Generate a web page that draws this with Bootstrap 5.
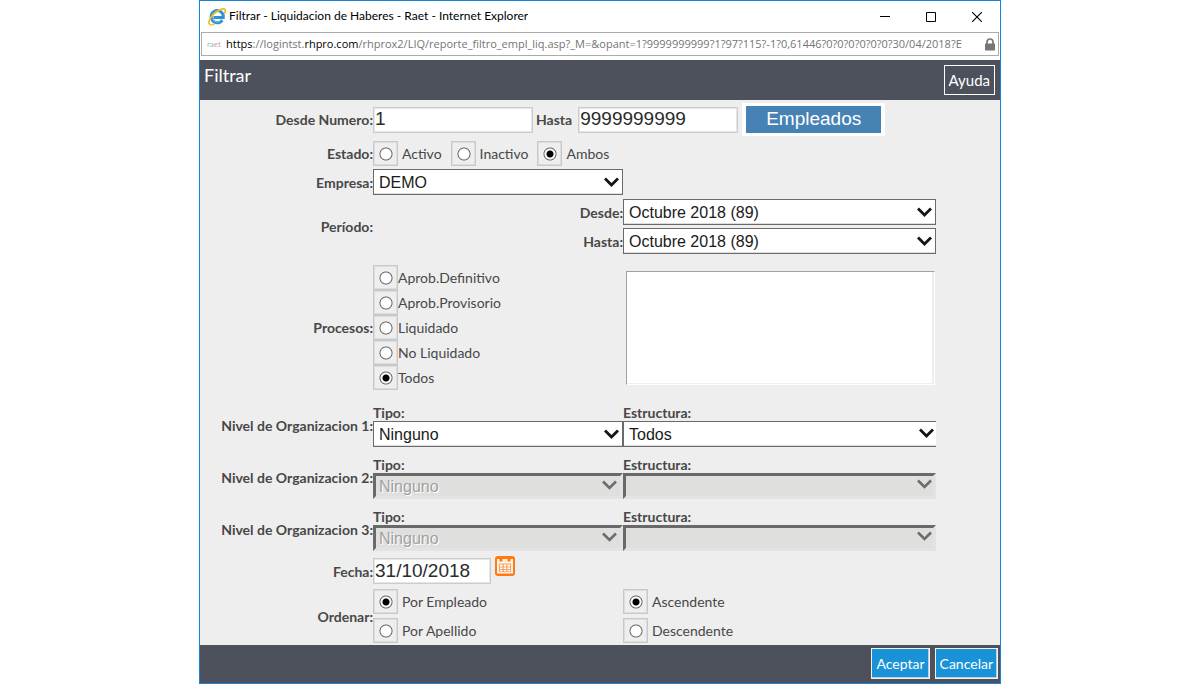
<!DOCTYPE html>
<html lang="es">
<head>
<meta charset="utf-8">
<meta name="viewport" content="width=device-width, initial-scale=1">
<title>Filtrar - Liquidacion de Haberes - Raet</title>
<link href="https://cdn.jsdelivr.net/npm/bootstrap@5.3.0/dist/css/bootstrap.min.css" rel="stylesheet">
<style>
  body { font-family: Lato, "Open Sans", sans-serif; font-size: 14px; line-height: 17px; color: #484848; background: #fff; }
  .ventana { max-width: 802px; border: 1px solid #1883d7; }

  /* Window chrome */
  .titulo { height: 31px; font-size: 12px; color: #000; padding-left: 8px; }
  .titulo .control { width: 46px; height: 31px; color: #000; }
  .titulo-texto { padding-left: 3px; line-height: 16px; margin-bottom: 2px; }
  .direccion { height: 24px; margin: 0 1px 4px; padding: 0 3px 0 5px; border: 1px solid #ababab;
               font: 11px/22px "Open Sans", sans-serif; color: #757575; }
  .direccion b { font-weight: 400; color: #000; }
  .marca { width: 19px; font: 8px/20px Lato, sans-serif; color: #d59a9a; }
  .marca i { font-style: normal; color: #8fc3bd; }

  .barra { background: #4d515c; color: #fff; }
  .encabezado { min-height: 40px; padding: 5px; padding-left: 4px; }
  .encabezado h1 { font-size: 18px; line-height: 20px; margin: 0; }
  .pie { min-height: 38px; padding: 3px 2px; gap: 5px; }
  .boton { --bs-btn-border-radius: 0; --bs-btn-padding-x: 4px; --bs-btn-padding-y: 0; --bs-btn-color: #fff;
           --bs-btn-border-color: #fff; --bs-btn-font-size: 15px; --bs-btn-hover-color: #fff; --bs-btn-hover-border-color: #fff;
           --bs-btn-line-height: 17px; height: 30px; }
  .accion { --bs-btn-bg: #1992d8; --bs-btn-hover-bg: #157fbd; --bs-btn-border-color: #f2f2f2; --bs-btn-font-size: 14px;
            --bs-btn-padding-y: 2px; height: 31px; box-shadow: inset -1px -1px 0 #b9cfdc; }

  /* Filter form */
  .filtro { background: #eee; padding: 3px 0 2px; }
  .fila { display: grid; grid-template-columns: 173fr 250fr 313fr 64fr; align-items: center; }
  .fila > .ancho { grid-column: 2 / -1; }
  .etiqueta { font-weight: 700; }
  .sep-3 { margin-top: 3px; }
  .sep-4 { margin-top: 4px; }
  .sep-5 { margin-top: 5px; }
  .sep-7 { margin-top: 7px; }
  .sep-9 { margin-top: 9px; }
  .sep-11 { margin-top: 11px; }
  .sep-14 { margin-top: 14px; }
  .estados { gap: 9px; }
  .hasta { padding: 0 6px 0 3px; }

  .campo { width: 160px; height: 26px; padding: 0 1px 1px; border: 1px solid #ccc; border-radius: 0; box-shadow: inset 0 0 0 1px #e6e6e6;
           font: 19px/22px "Liberation Sans", Arial, sans-serif; color: #2b2b2b; }
  .campo-fecha { width: 118px; }
  .empleados { width: 143px; height: 33px; border: 3px solid #fff; border-width: 3px 4px; border-radius: 0; background: #4682b4; color: #fff;
               padding: 0 0 2px; font: 19px/22px "Liberation Sans", Arial, sans-serif; }

  .lista { height: 26px; padding: 1px 24px 0 5px; border: 1px solid #6a6a6a; border-radius: 0; box-shadow: inset 0 -1px 0 #ddd;
           font: 16px/23px "Liberation Sans", Arial, sans-serif; color: #1a1a1a; background-color: #fff; background-size: 15px 11px;
           background-position: right 3px top 7px;
           background-image: url("data:image/svg+xml,%3Csvg xmlns='http://www.w3.org/2000/svg' viewBox='0 0 15 11'%3E%3Cpath d='M1 1.5l6.5 6.5L14 1.5' fill='none' stroke='%23151515' stroke-width='2.8'/%3E%3C/svg%3E"); }
  .lista-abierta { border-right: 0; background-position: right 2px top 6px; }
  .lista:disabled { border: 3px solid; border-color: #696969 #e3e3e3 #e3e3e3 #696969; padding: 1px 24px 0 3px; background-color: #dfdfde;
           color: #a0a0a0; text-shadow: 1px 1px 0 #fff; line-height: 20px; opacity: 1; box-shadow: none; background-position: right 3px top 4px;
           background-image: url("data:image/svg+xml,%3Csvg xmlns='http://www.w3.org/2000/svg' viewBox='0 0 15 11'%3E%3Cpath d='M1 1.5l6.5 6.5L14 1.5' fill='none' stroke='%236d6d6d' stroke-width='2.6'/%3E%3C/svg%3E"); }
  .lista-abierta:disabled { background-position: right 1px top 3px; }
  .seleccion { height: 114px; margin-left: 3px; width: calc(100% - 4px); padding: 2px; resize: none; border: 1px solid; border-color: #a0a0a0 #fff #fff #a0a0a0;
           border-radius: 0; box-shadow: inset -2px -1px 0 #eee; background: #fff; }

  .radio { appearance: none; flex: none; width: 25px; height: 25px; margin: 0; border: 1px solid #c8c8c8; box-shadow: inset 0 0 0 1px #ddd;
           background: radial-gradient(circle at 12px 12px, #fff 5px, #666 6px, #666 6px, transparent 7px); }
  .radio:checked { background: radial-gradient(circle at 12px 12px, #000 3px, #fff 4px, #fff 5px, #666 6px, #666 6px, transparent 7px); }
  .calendario { line-height: 0; margin: -10px 0 0 4px; }
</style>
</head>
<body>
<main class="ventana mx-auto">
  <div class="titulo d-flex align-items-center bg-white">
    <svg width="18" height="18" viewBox="0 0 18 18" aria-hidden="true">
      <path d="M14.3 12.1A6.1 6.1 0 1 1 15.300 9.400H5.500" fill="none" stroke="#2f93d3" stroke-width="3"/>
      <path d="M14 11.300A5.500 5.500 0 0 1 4.200 11" fill="none" stroke="#66bdea" stroke-width="1"/>
      <path d="M2.200 16.600C-.8 15.200 2 9 7 4.800 11 1.500 15.800-.2 17 1.600c.6.9.2 2.500-.6 4" fill="none" stroke="#f3bd29" stroke-width="1.800"/>
      <path d="M2.200 16.600c1.200.6 3 .2 4.800-.8" fill="none" stroke="#f3bd29" stroke-width="1.300"/>
    </svg>
    <span class="titulo-texto me-auto text-truncate">Filtrar - Liquidacion de Haberes - Raet - Internet Explorer</span>
    <button type="button" class="control btn p-0 border-0 rounded-0" aria-label="Minimizar"><svg class="d-block mx-auto" width="10" height="10"><path d="M0 4.500h10" stroke="#000"/></svg></button>
    <button type="button" class="control btn p-0 border-0 rounded-0" aria-label="Maximizar"><svg class="d-block mx-auto" width="10" height="10"><path d="M.5.5h9v9h-9z" fill="none" stroke="#000"/></svg></button>
    <button type="button" class="control btn p-0 border-0 rounded-0" aria-label="Cerrar"><svg class="d-block mx-auto" width="10" height="10"><path d="M0 0l10 10M10 0L0 10" stroke="#000" stroke-width="1.100"/></svg></button>
  </div>
  <div class="direccion d-flex align-items-center bg-white">
    <span class="marca"><i>ra</i>et</span>
    <span class="flex-grow-1 text-nowrap overflow-hidden"><b>https</b>://logintst.<b>rhpro.com</b>/rhprox2/LIQ/reporte_filtro_empl_liq.asp?_M=&amp;opant=1?9999999999?1?97?115?-1?0,61446?0?0?0?0?0?0?30/04/2018?E</span>
    <svg class="flex-shrink-0" width="10" height="13" viewBox="0 0 10 13" aria-hidden="true"><path d="M2 6V4a3 3 0 0 1 6 0v2" fill="none" stroke="#767676" stroke-width="1.700"/><rect y="5.500" width="10" height="7" rx=".6" fill="#767676"/></svg>
  </div>

  <header class="barra encabezado d-flex justify-content-between align-items-start">
    <h1 class="fw-normal">Filtrar</h1>
    <button type="button" class="btn boton">Ayuda</button>
  </header>

  <form>
    <div class="filtro">
      <div class="fila">
        <label class="etiqueta text-end" for="desdeNumero">Desde Numero:</label>
        <div class="ancho d-flex align-items-center">
          <input class="form-control campo" id="desdeNumero" type="text" value="1">
          <label class="etiqueta hasta" for="hastaNumero">Hasta</label>
          <input class="form-control campo me-1" id="hastaNumero" type="text" value="9999999999">
          <button type="button" class="btn empleados">Empleados</button>
        </div>
      </div>

      <div class="fila sep-5" role="radiogroup" aria-labelledby="lblEstado">
        <span class="etiqueta text-end" id="lblEstado">Estado:</span>
        <div class="ancho estados d-flex">
          <label class="d-flex align-items-center gap-1"><input class="radio" type="radio" name="estado">Activo</label>
          <label class="d-flex align-items-center gap-1"><input class="radio" type="radio" name="estado">Inactivo</label>
          <label class="d-flex align-items-center gap-1"><input class="radio" type="radio" name="estado" checked>Ambos</label>
        </div>
      </div>

      <div class="fila sep-3">
        <label class="etiqueta text-end" for="empresa">Empresa:</label>
        <select class="form-select lista" id="empresa"><option>DEMO</option></select>
      </div>

      <div class="fila sep-4" role="group" aria-labelledby="lblPeriodo">
        <span class="etiqueta text-end" id="lblPeriodo">Período:</span>
        <div class="d-grid">
          <label class="etiqueta text-end mb-2 pb-1" for="perDesde">Desde:</label>
          <label class="etiqueta text-end" for="perHasta">Hasta:</label>
        </div>
        <div>
          <select class="form-select lista" id="perDesde"><option>Octubre 2018 (89)</option></select>
          <select class="form-select lista sep-3" id="perHasta"><option>Octubre 2018 (89)</option></select>
        </div>
      </div>

      <div class="fila sep-11" role="radiogroup" aria-labelledby="lblProcesos">
        <span class="etiqueta text-end" id="lblProcesos">Procesos:</span>
        <div>
          <label class="d-flex align-items-center"><input class="radio" type="radio" name="proceso">Aprob.Definitivo</label>
          <label class="d-flex align-items-center"><input class="radio" type="radio" name="proceso">Aprob.Provisorio</label>
          <label class="d-flex align-items-center"><input class="radio" type="radio" name="proceso">Liquidado</label>
          <label class="d-flex align-items-center"><input class="radio" type="radio" name="proceso">No Liquidado</label>
          <label class="d-flex align-items-center"><input class="radio" type="radio" name="proceso" checked>Todos</label>
        </div>
        <textarea class="form-control seleccion" aria-label="Procesos seleccionados" readonly></textarea>
      </div>

      <div class="fila sep-14">
        <span class="etiqueta text-end">Nivel de Organizacion 1:</span>
        <div><label class="etiqueta d-block" for="tipo1">Tipo:</label><select class="form-select lista" id="tipo1"><option>Ninguno</option></select></div>
        <div><label class="etiqueta d-block" for="estr1">Estructura:</label><select class="form-select lista lista-abierta" id="estr1"><option>Todos</option></select></div>
      </div>
      <div class="fila sep-9">
        <span class="etiqueta text-end">Nivel de Organizacion 2:</span>
        <div><label class="etiqueta d-block" for="tipo2">Tipo:</label><select class="form-select lista" id="tipo2" disabled><option>Ninguno</option></select></div>
        <div><label class="etiqueta d-block" for="estr2">Estructura:</label><select class="form-select lista lista-abierta" id="estr2" disabled></select></div>
      </div>
      <div class="fila sep-9">
        <span class="etiqueta text-end">Nivel de Organizacion 3:</span>
        <div><label class="etiqueta d-block" for="tipo3">Tipo:</label><select class="form-select lista" id="tipo3" disabled><option>Ninguno</option></select></div>
        <div><label class="etiqueta d-block" for="estr3">Estructura:</label><select class="form-select lista lista-abierta" id="estr3" disabled></select></div>
      </div>

      <div class="fila sep-7">
        <label class="etiqueta text-end" for="fecha">Fecha:</label>
        <div class="ancho d-flex align-items-center">
          <input class="form-control campo campo-fecha" id="fecha" type="text" value="31/10/2018">
          <button type="button" class="btn p-0 border-0 calendario" aria-label="Abrir calendario">
            <svg width="20" height="20" viewBox="0 0 20 20"><rect width="20" height="20" rx="3" fill="#ff7a10"/><path d="M2 3h2.500v2.500h3V3h5v2.500h3V3H18v14.500H2z" fill="#fff3e8"/><path d="M4 7.500h12v8.500H4z" fill="#f5a45f"/><path d="M5 8.500h2.500v2H5zM8.800 8.500h2.500v2H8.800zM12.500 8.500H15v2h-2.500zM5 11.500h2.500v1.500H5zM8.800 11.500h2.500v1.500H8.800zM12.500 11.500H15v1.500h-2.500zM5 14h2.500v1.200H5zM8.800 14h2.500v1.200H8.800zM12.500 14H15v1.200h-2.500z" fill="#fff"/></svg>
          </button>
        </div>
      </div>

      <div class="fila sep-5" role="group" aria-labelledby="lblOrdenar">
        <span class="etiqueta text-end" id="lblOrdenar">Ordenar:</span>
        <div>
          <label class="d-flex align-items-center gap-1"><input class="radio" type="radio" name="orden" checked>Por Empleado</label>
          <label class="d-flex align-items-center gap-1 sep-4"><input class="radio" type="radio" name="orden">Por Apellido</label>
        </div>
        <div>
          <label class="d-flex align-items-center gap-1"><input class="radio" type="radio" name="sentido" checked>Ascendente</label>
          <label class="d-flex align-items-center gap-1 sep-4"><input class="radio" type="radio" name="sentido">Descendente</label>
        </div>
      </div>
    </div>

    <footer class="barra pie d-flex justify-content-end">
      <button type="submit" class="btn boton accion">Aceptar</button>
      <button type="button" class="btn boton accion">Cancelar</button>
    </footer>
  </form>
</main>
<script src="https://cdn.jsdelivr.net/npm/bootstrap@5.3.0/dist/js/bootstrap.bundle.min.js"></script>
</body>
</html>
